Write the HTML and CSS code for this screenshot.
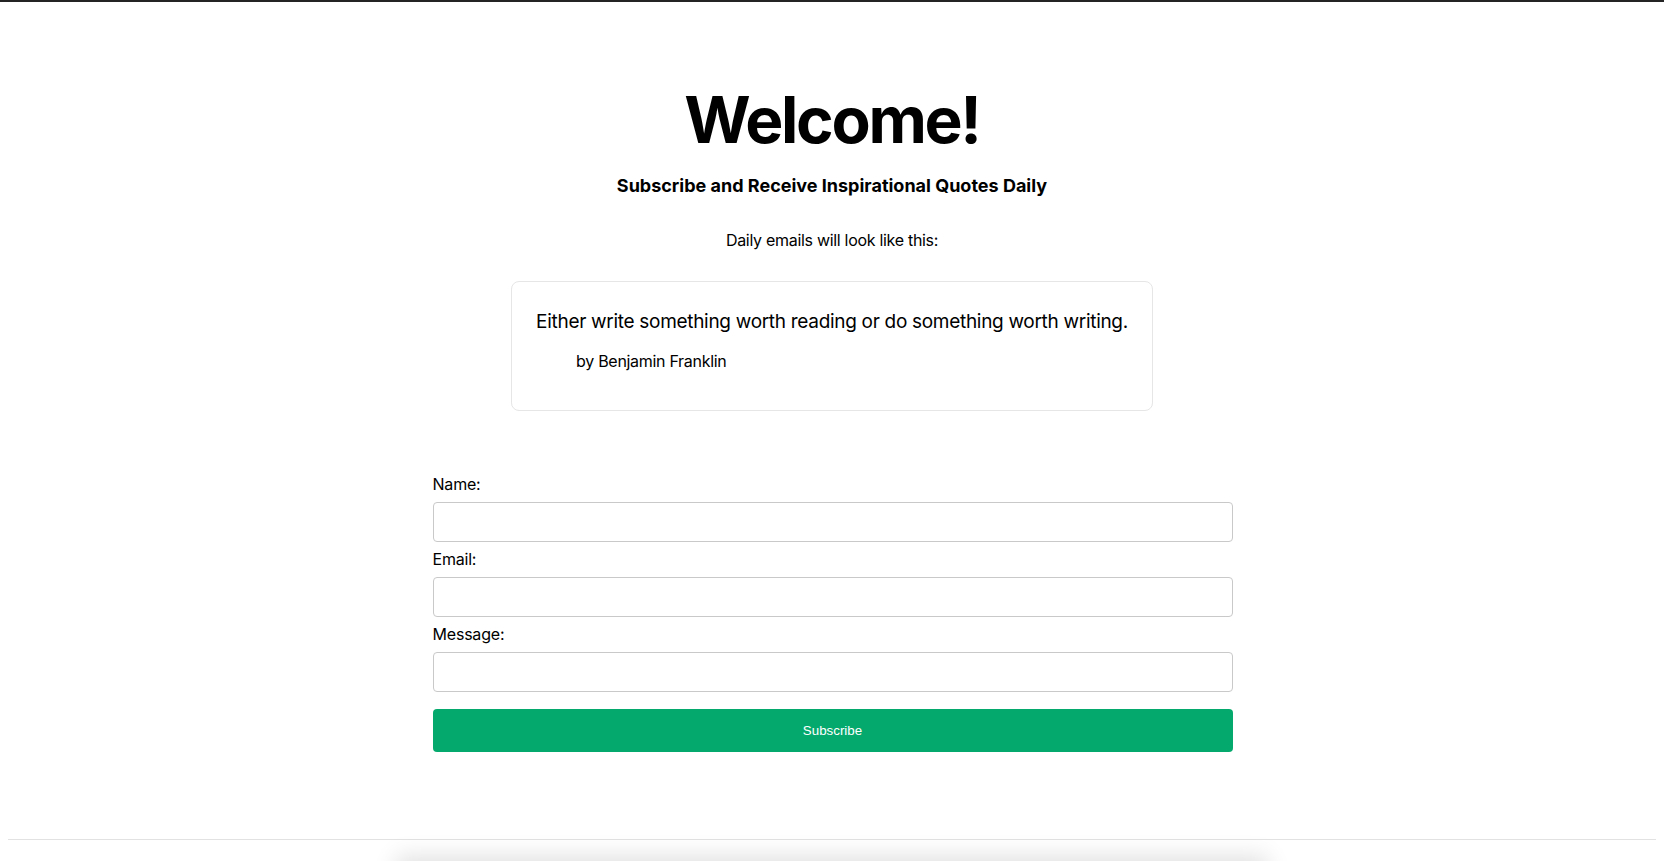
FILE: index.html
```html
<!DOCTYPE html>
<html lang="en">
<head>
<meta charset="utf-8">
<title>Welcome!</title>
<link rel="stylesheet" href="styles.css">
</head>
<body>
<div class="top-bar"></div>
<main class="page">
  <h1 class="title">Welcome!</h1>
  <h2 class="subtitle">Subscribe and Receive Inspirational Quotes Daily</h2>
  <p class="intro">Daily emails will look like this:</p>
  <div class="quote-card">
    <p class="quote-text">Either write something worth reading or do something worth writing.</p>
    <p class="quote-author">by Benjamin Franklin</p>
  </div>
  <form class="form">
    <label class="label" for="name">Name:</label>
    <input class="input" id="name" type="text">
    <label class="label" for="email">Email:</label>
    <input class="input" id="email" type="email">
    <label class="label" for="message">Message:</label>
    <input class="input" id="message" type="text">
    <button class="button" type="button">Subscribe</button>
  </form>
</main>
<hr class="divider">
<div class="footer-shadow"></div>
</body>
</html>
```

FILE: styles.css
```css
html, body {
  margin: 0;
  padding: 0;
  background: #ffffff;
}

body {
  font-family: Inter, "Noto Sans", "Liberation Sans", sans-serif;
  color: #000000;
  padding: 0 8px;
}

.top-bar {
  height: 2px;
  background: #242424;
  margin: 0 -8px;
}

.page {
  display: flex;
  flex-direction: column;
  align-items: center;
  padding-top: 79px;
}

.title {
  margin: 0;
  font-size: 64px;
  font-weight: 700;
  letter-spacing: -2.3px;
  line-height: normal;
}

.subtitle {
  margin: 17px 0 0;
  font-size: 18px;
  font-weight: 700;
  line-height: normal;
}

.intro {
  margin: 34px 0 0;
  font-size: 16px;
  letter-spacing: -0.3px;
  line-height: normal;
}

.quote-card {
  margin-top: 31px;
  border: 1px solid #e6e6e6;
  border-radius: 8px;
  padding: 28px 24px 39px;
}

.quote-text {
  margin: 0;
  font-size: 19px;
  letter-spacing: -0.3px;
  line-height: normal;
}

.quote-author {
  margin: 18px 0 0 40px;
  font-size: 16px;
  letter-spacing: -0.3px;
  line-height: normal;
}

.form {
  width: 800px;
  margin-top: 63px;
  margin-left: 1px;
  display: flex;
  flex-direction: column;
}

.label {
  font-size: 16px;
  letter-spacing: -0.2px;
  line-height: normal;
  margin: 7px 0 8px;
}

.label:first-child {
  margin-top: 0;
}

.input {
  box-sizing: border-box;
  height: 40px;
  width: 100%;
  border: 1px solid #c9c9c9;
  border-radius: 4px;
  margin: 0;
  padding: 8px 12px;
  font-family: inherit;
  font-size: 16px;
}

.button {
  margin-top: 17px;
  height: 43px;
  border: none;
  border-radius: 4px;
  background: #04aa6d;
  color: #ffffff;
  font-family: "Liberation Sans", Arial, sans-serif;
  font-size: 13.33px;
}

.divider {
  margin: 87px 0 0;
  border: none;
  border-top: 1px solid #e2e2e2;
  height: 0;
}

.footer-shadow {
  width: 860px;
  height: 60px;
  margin: 22px auto 0;
  background: #f0f0f0;
  box-shadow: 0 0 22px 6px rgba(0, 0, 0, 0.12);
}
```
